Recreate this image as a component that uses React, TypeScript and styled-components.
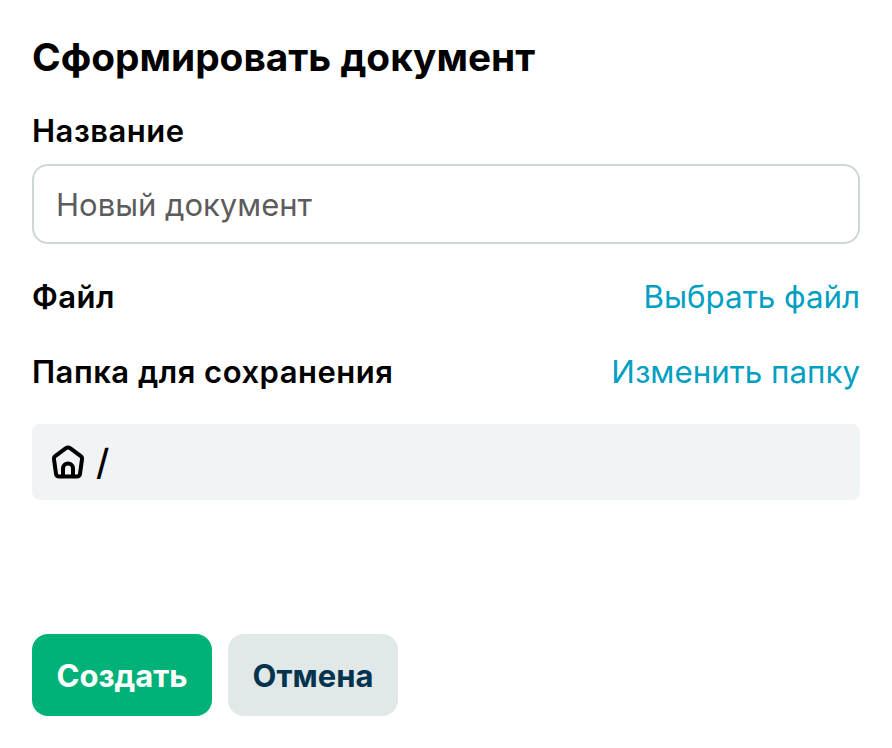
import React from "react";
import styled, { createGlobalStyle } from "styled-components";

const GlobalStyle = createGlobalStyle`
  html, body {
    margin: 0;
    padding: 0;
    background: #fff;
  }
  body {
    font-family: "Inter", "Noto Sans", sans-serif;
  }
`;

const Page = styled.div`
  box-sizing: border-box;
  width: 892px;
  height: 748px;
  padding: 32px;
  display: flex;
  flex-direction: column;
`;

const Title = styled.h1`
  margin: 0;
  font-size: 38.8px;
  line-height: 50px;
  font-weight: 700;
  color: #000;
`;

const Label = styled.div`
  font-size: 31px;
  letter-spacing: 0.5px;
  line-height: 40px;
  font-weight: 600;
  color: #000;
`;

const NameLabel = styled(Label)`
  margin-top: 29px;
  margin-bottom: 13px;
`;

const NameInput = styled.input`
  box-sizing: border-box;
  width: 100%;
  height: 80px;
  padding: 0 22px;
  border: 2px solid #cdd7d5;
  border-radius: 16px;
  background: #fff;
  font-family: inherit;
  font-size: 31px;
  color: #000;
  outline: none;

  &::placeholder {
    color: #5c5c5c;
    opacity: 1;
  }
`;

const Row = styled.div<{ $top: number }>`
  display: flex;
  justify-content: space-between;
  align-items: center;
  margin-top: ${(p) => p.$top}px;
`;

const LinkButton = styled.button`
  border: none;
  background: none;
  padding: 0;
  font-family: inherit;
  font-size: 31.3px;
  line-height: 40px;
  font-weight: 400;
  color: #00a0c3;
  cursor: pointer;
`;

const Path = styled.div`
  display: flex;
  align-items: center;
  gap: 10px;
  height: 76px;
  margin-top: 32px;
  padding: 0 18px;
  border-radius: 8px;
  background: #f1f4f5;
  font-size: 36px;
  font-weight: 500;
  color: #000;
`;

const Actions = styled.div`
  display: flex;
  gap: 16px;
  margin-top: auto;
`;

const Button = styled.button<{ $primary?: boolean }>`
  height: 82px;
  width: ${(p) => (p.$primary ? 180 : 170)}px;
  border: none;
  border-radius: 16px;
  background: ${(p) => (p.$primary ? "#00b277" : "#e1e8e8")};
  color: ${(p) => (p.$primary ? "#fff" : "#03334e")};
  font-family: inherit;
  font-size: 31px;
  font-weight: 700;
  cursor: pointer;
`;

function HomeIcon() {
  return (
    <svg width="36" height="36" viewBox="0 0 36 36" fill="none" stroke="#000" strokeWidth="4" strokeLinejoin="round" strokeLinecap="round">
      <path d="M15.6 4.4 5.2 12.2c-1 .7-1.4 1.8-1.2 3l2 14.6c.2 1.6 1.5 2.7 3.1 2.7h17.8c1.6 0 2.9-1.1 3.1-2.7l2-14.6c.2-1.2-.2-2.3-1.2-3L20.4 4.4c-1.4-1-3.4-1-4.8 0Z" />
      <path d="M13 32v-7.5a5 5 0 0 1 10 0V32" />
    </svg>
  );
}

export default function App() {
  return (
    <>
      <GlobalStyle />
      <Page>
        <Title>Сформировать документ</Title>
        <NameLabel>Название</NameLabel>
        <NameInput placeholder="Новый документ" />
        <Row $top={33}>
          <Label>Файл</Label>
          <LinkButton type="button">Выбрать файл</LinkButton>
        </Row>
        <Row $top={35}>
          <Label>Папка для сохранения</Label>
          <LinkButton type="button">Изменить папку</LinkButton>
        </Row>
        <Path>
          <HomeIcon />
          <span>/</span>
        </Path>
        <Actions>
          <Button $primary type="button">Создать</Button>
          <Button type="button">Отмена</Button>
        </Actions>
      </Page>
    </>
  );
}
